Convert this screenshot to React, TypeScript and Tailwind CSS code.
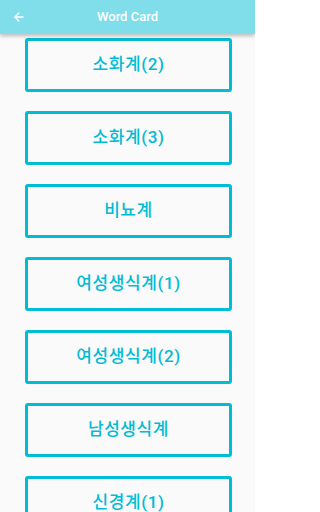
import { ArrowLeft } from "lucide-react";

const items = ["소화계(2)", "소화계(3)", "비뇨계", "여성생식계(1)", "여성생식계(2)", "남성생식계", "신경계(1)"];

export default function App() {
  return (
    <div
      className="flex h-[512px] w-[255px] flex-col overflow-hidden bg-[#fafafa]"
      style={{ fontFamily: "Roboto, 'Noto Sans CJK KR', sans-serif" }}
    >
      <header className="relative z-10 flex h-[34px] shrink-0 items-center bg-[#80deea] px-3 shadow-[0_2px_4px_rgba(0,0,0,0.25)]">
        <ArrowLeft className="h-[14px] w-[14px] text-white" strokeWidth={2.2} />
        <h1 className="flex-1 pr-[14px] text-center text-[13px] font-medium text-white">Word Card</h1>
      </header>
      <div className="flex flex-col gap-[19px] px-[25px] pt-[4px]">
        {items.map((name) => (
          <button
            key={name}
            className="flex h-[54px] w-[207px] shrink-0 items-center justify-center rounded-[3px] border-[3px] border-[#00bcd4] bg-[#fafafa] text-[17px] font-medium tracking-[0.6px] text-[#00bcd4]"
          >
            {name}
          </button>
        ))}
      </div>
    </div>
  );
}
